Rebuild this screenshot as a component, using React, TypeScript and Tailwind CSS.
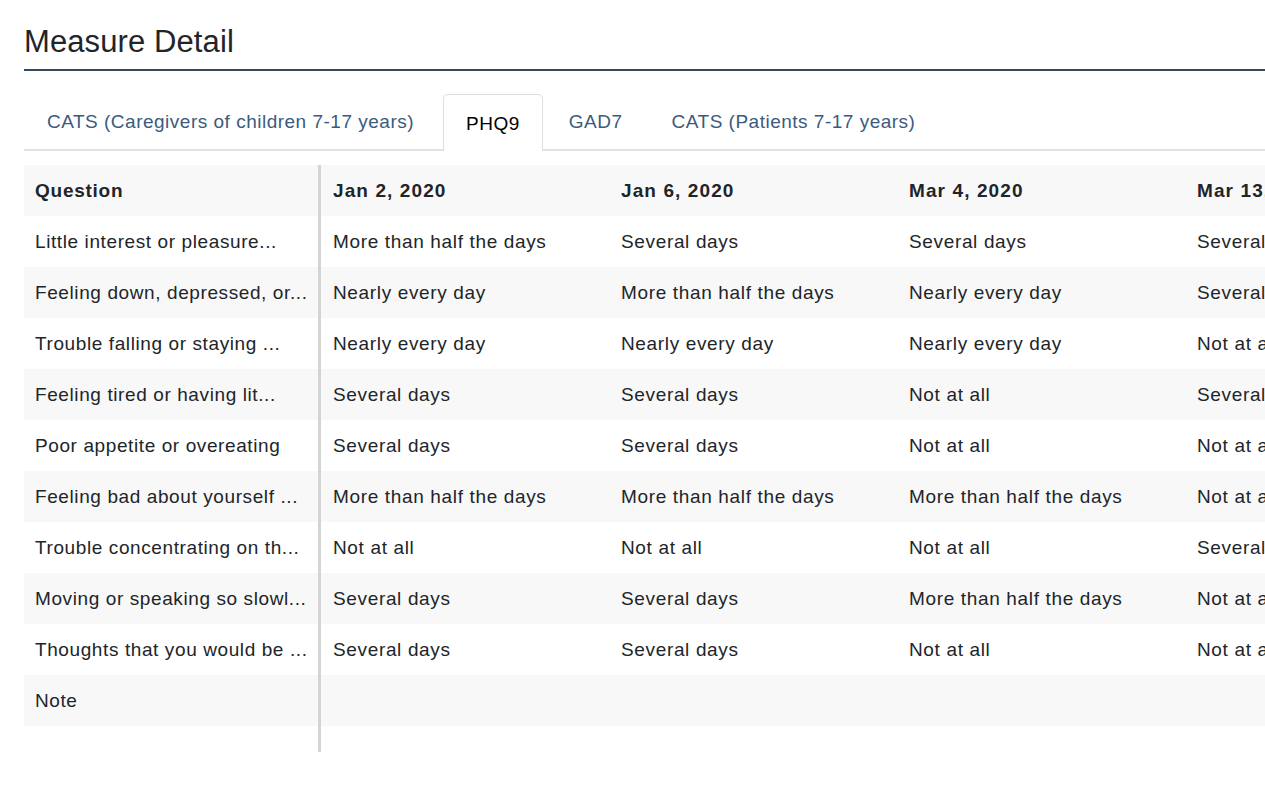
const tabs = [
  "CATS (Caregivers of children 7-17 years)",
  "PHQ9",
  "GAD7",
  "CATS (Patients 7-17 years)",
];

const dates = ["Jan 2, 2020", "Jan 6, 2020", "Mar 4, 2020", "Mar 13, 2020"];

const rows: { question: string; answers: string[] }[] = [
  {
    question: "Little interest or pleasure...",
    answers: ["More than half the days", "Several days", "Several days", "Several days"],
  },
  {
    question: "Feeling down, depressed, or...",
    answers: ["Nearly every day", "More than half the days", "Nearly every day", "Several days"],
  },
  {
    question: "Trouble falling or staying ...",
    answers: ["Nearly every day", "Nearly every day", "Nearly every day", "Not at all"],
  },
  {
    question: "Feeling tired or having lit...",
    answers: ["Several days", "Several days", "Not at all", "Several days"],
  },
  {
    question: "Poor appetite or overeating",
    answers: ["Several days", "Several days", "Not at all", "Not at all"],
  },
  {
    question: "Feeling bad about yourself ...",
    answers: ["More than half the days", "More than half the days", "More than half the days", "Not at all"],
  },
  {
    question: "Trouble concentrating on th...",
    answers: ["Not at all", "Not at all", "Not at all", "Several days"],
  },
  {
    question: "Moving or speaking so slowl...",
    answers: ["Several days", "Several days", "More than half the days", "Not at all"],
  },
  {
    question: "Thoughts that you would be ...",
    answers: ["Several days", "Several days", "Not at all", "Not at all"],
  },
  { question: "Note", answers: ["", "", "", ""] },
];

const App = () => {
  return (
    <div className="min-h-screen bg-white pl-6 text-[#212529] font-['Liberation_Sans',Arial,sans-serif] overflow-hidden">
      <h1 className="pt-[23px] pb-[8px] text-[31px] leading-[38px] font-normal tracking-[0.1px]">Measure Detail</h1>
      <div className="h-[2px] bg-[#34495e]" />

      <div className="mt-[23px] flex gap-[3px] border-b-2 border-[#e2e2e2] tracking-[0.5px]">
        {tabs.map((tab, i) => {
          const active = tab === "PHQ9";
          return (
            <div
              key={tab}
              className={
                active
                  ? "-mb-[2px] h-[57px] px-[22px] pt-[2px] flex items-center text-[19px] text-black bg-white border border-b-0 border-[#dedede] rounded-t-[5px]"
                  : `h-[55px] px-[22px] pt-[2px] flex items-center text-[19px] text-[#3b5b7d] border border-transparent ${
                      i === 0 ? "mr-[3px]" : ""
                    }`
              }
            >
              {tab}
            </div>
          );
        })}
      </div>

      <div className="mt-[14px] overflow-hidden text-[19px]">
        {[null, ...rows].map((row, i) => {
          const header = row === null;
          const striped = i % 2 === 0;
          return (
            <div key={i} className={`flex h-[51px] ${striped ? "bg-[#f8f8f8]" : "bg-white"}`}>
              <div
                className={`w-[297px] shrink-0 pl-[11px] pt-[2px] flex items-center border-r-[3px] border-[#d4d4d4] whitespace-nowrap overflow-hidden ${
                  header ? "font-bold tracking-[0.75px]" : "tracking-[0.6px]"
                }`}
              >
                {header ? "Question" : row.question}
              </div>
              {(header ? dates : row.answers).map((cell, j) => (
                <div
                  key={j}
                  className={`w-[288px] shrink-0 pl-[12px] pt-[2px] flex items-center whitespace-nowrap ${
                    header ? "font-bold tracking-[1.1px]" : "tracking-[0.65px]"
                  }`}
                >
                  {cell}
                </div>
              ))}
            </div>
          );
        })}
        <div className="flex h-[26px]">
          <div className="w-[297px] shrink-0 border-r-[3px] border-[#d4d4d4]" />
        </div>
      </div>
    </div>
  );
};

export default App;
